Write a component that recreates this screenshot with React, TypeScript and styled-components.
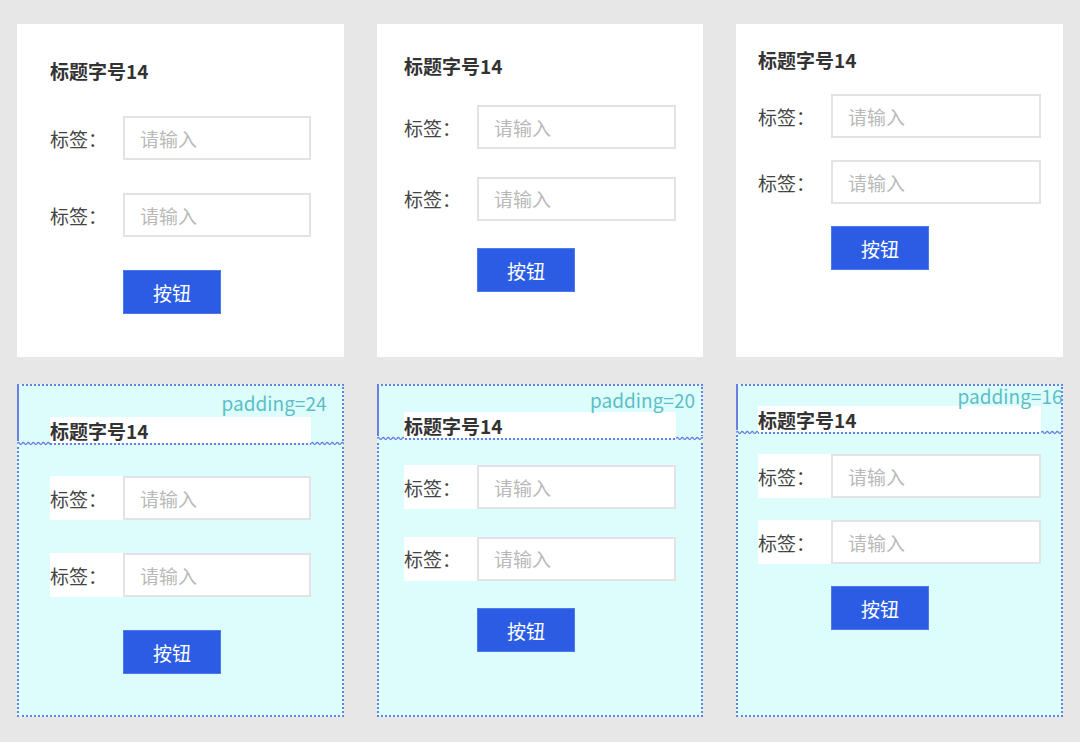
import React from 'react';
import styled, {createGlobalStyle, css} from 'styled-components';

const GUIDE = '#6d7de0';
const FONT = `"Noto Sans CJK SC", "Noto Sans", sans-serif`;

const GlobalStyle = createGlobalStyle`
  html, body {
    margin: 0;
    padding: 0;
    background: #e7e7e7;
  }
  body {
    font-family: ${FONT};
  }
`;

const variants = [
    {pad: 33, note: 'padding=24', noteRight: 15, noteTop: 5.5},
    {pad: 27.5, note: 'padding=20', noteRight: 6, noteTop: 2.5},
    {pad: 22, note: 'padding=16', noteRight: -2, noteTop: -1.5},
];

const App = () => {
    return (
        <>
            <GlobalStyle/>
            <Page>
                {variants.map(v => <FormCard key={'plain' + v.pad} pad={v.pad}/>)}
                {variants.map(v => (
                    <FormCard key={'guide' + v.pad} pad={v.pad} guides note={v.note}
                              noteRight={v.noteRight} noteTop={v.noteTop}/>
                ))}
            </Page>
        </>
    );
};

type CardProps = {
    pad: number;
    guides?: boolean;
    note?: string;
    noteRight?: number;
    noteTop?: number;
};

const FormCard = ({pad, guides = false, note, noteRight = 0, noteTop = 0}: CardProps) => {
    return (
        <Card $guides={guides}>
            <Header $pad={pad} $guides={guides}>
                <Title $guides={guides}>标题字号14</Title>
                {guides && <>
                    <Wave $side="left" $w={pad}/>
                    <Wave $side="right" $w={pad}/>
                </>}
            </Header>

            <Body $pad={pad}>
                <FieldRow>
                    <Label $guides={guides}>标签：</Label>
                    <TextInput readOnly placeholder="请输入"/>
                </FieldRow>
                <FieldRow>
                    <Label $guides={guides}>标签：</Label>
                    <TextInput readOnly placeholder="请输入"/>
                </FieldRow>
                <ButtonRow>
                    <PrimaryButton>按钮</PrimaryButton>
                </ButtonRow>
            </Body>

            {note && <Note $right={noteRight} $top={noteTop}>{note}</Note>}
        </Card>
    );
};

// squiggly bit of the header's bottom edge, only in the padding area
const Wave = ({$side, $w}: { $side: 'left' | 'right', $w: number }) => {
    let d = 'M0 2.5';
    for (let x = 0; x < $w + 6; x += 5) {
        d += ` Q${x + 1.25} 0.5 ${x + 2.5} 2.5 T${x + 5} 2.5`;
    }
    return (
        <WaveSvg $side={$side} width={$w} height={5} viewBox={`0 0 ${$w} 5`}>
            <rect x={0} y={0} width={$w} height={5} fill="#dcfdfc"/>
            <path d={d} fill="none" stroke={GUIDE} strokeWidth={1.3}/>
        </WaveSvg>
    );
};

const Page = styled.main`
  display: grid;
  grid-template-columns: repeat(3, 326.5px);
  grid-auto-rows: 333px;
  column-gap: 33px;
  row-gap: 27px;
  padding: 24px 0 0 17px;
  min-height: 742px;
  box-sizing: border-box;
`;

const Card = styled.section<{ $guides: boolean }>`
  position: relative;
  box-sizing: border-box;
  display: flex;
  flex-direction: column;
  border: 2px solid transparent;
  background: #fff;

  ${p => p.$guides && css`
    background: #dcfdfc;
    border: 2px dotted ${GUIDE};
  `}
`;

const Header = styled.div<{ $pad: number; $guides: boolean }>`
  position: relative;
  margin: -2px -2px 0 -2px;
  padding: ${p => p.$pad}px ${p => p.$pad}px 0 ${p => p.$pad}px;
  border-left: 2px solid transparent;
  border-bottom: 2px solid transparent;

  ${p => p.$guides && css`
    border-left: 2px solid ${GUIDE};
    border-bottom: 2px dotted ${GUIDE};
  `}
`;

const WaveSvg = styled.svg<{ $side: 'left' | 'right' }>`
  position: absolute;
  bottom: -3px;
  ${p => p.$side === 'left' ? 'left: -2px;' : 'right: 0;'}
`;

const Title = styled.h2<{ $guides: boolean }>`
  margin: 0 0 0 -2px;
  height: 26px;
  font-size: 19px;
  line-height: 28px;
  font-weight: 700;
  color: #333;
  white-space: nowrap;
  background: ${p => p.$guides ? '#fff' : 'transparent'};
`;

const Body = styled.div<{ $pad: number }>`
  display: flex;
  flex-direction: column;
  gap: ${p => p.$pad}px;
  padding: ${p => p.$pad - 2}px ${p => p.$pad - 2}px 0 ${p => p.$pad - 2}px;
`;

const FieldRow = styled.div`
  display: flex;
  height: 44px;
`;

const Label = styled.label<{ $guides: boolean }>`
  flex: 0 0 73px;
  display: flex;
  align-items: center;
  font-size: 19px;
  color: #444;
  background: ${p => p.$guides ? '#fff' : 'transparent'};
`;

const TextInput = styled.input`
  flex: 1;
  min-width: 0;
  box-sizing: border-box;
  height: 44px;
  margin: 0;
  padding: 0 0 0 15px;
  border: 2px solid #e3e3e3;
  border-radius: 0;
  outline: none;
  background: #fff;
  font-family: ${FONT};
  font-size: 19px;
  color: #333;

  &::placeholder {
    color: #b9b9b9;
  }
`;

const ButtonRow = styled.div`
  display: flex;
  padding-left: 73px;
`;

const PrimaryButton = styled.button`
  width: 98px;
  height: 44px;
  margin: 0;
  padding: 0;
  border: 1px solid #4d7bec;
  border-radius: 0;
  background: #2b5ce3;
  color: #fff;
  font-family: ${FONT};
  font-size: 19px;
  cursor: pointer;
`;

const Note = styled.span<{ $right: number; $top: number }>`
  position: absolute;
  right: ${p => p.$right}px;
  top: ${p => p.$top}px;
  font-size: 19px;
  line-height: 21px;
  color: #5cbec6;
  white-space: nowrap;
`;

export default App;
